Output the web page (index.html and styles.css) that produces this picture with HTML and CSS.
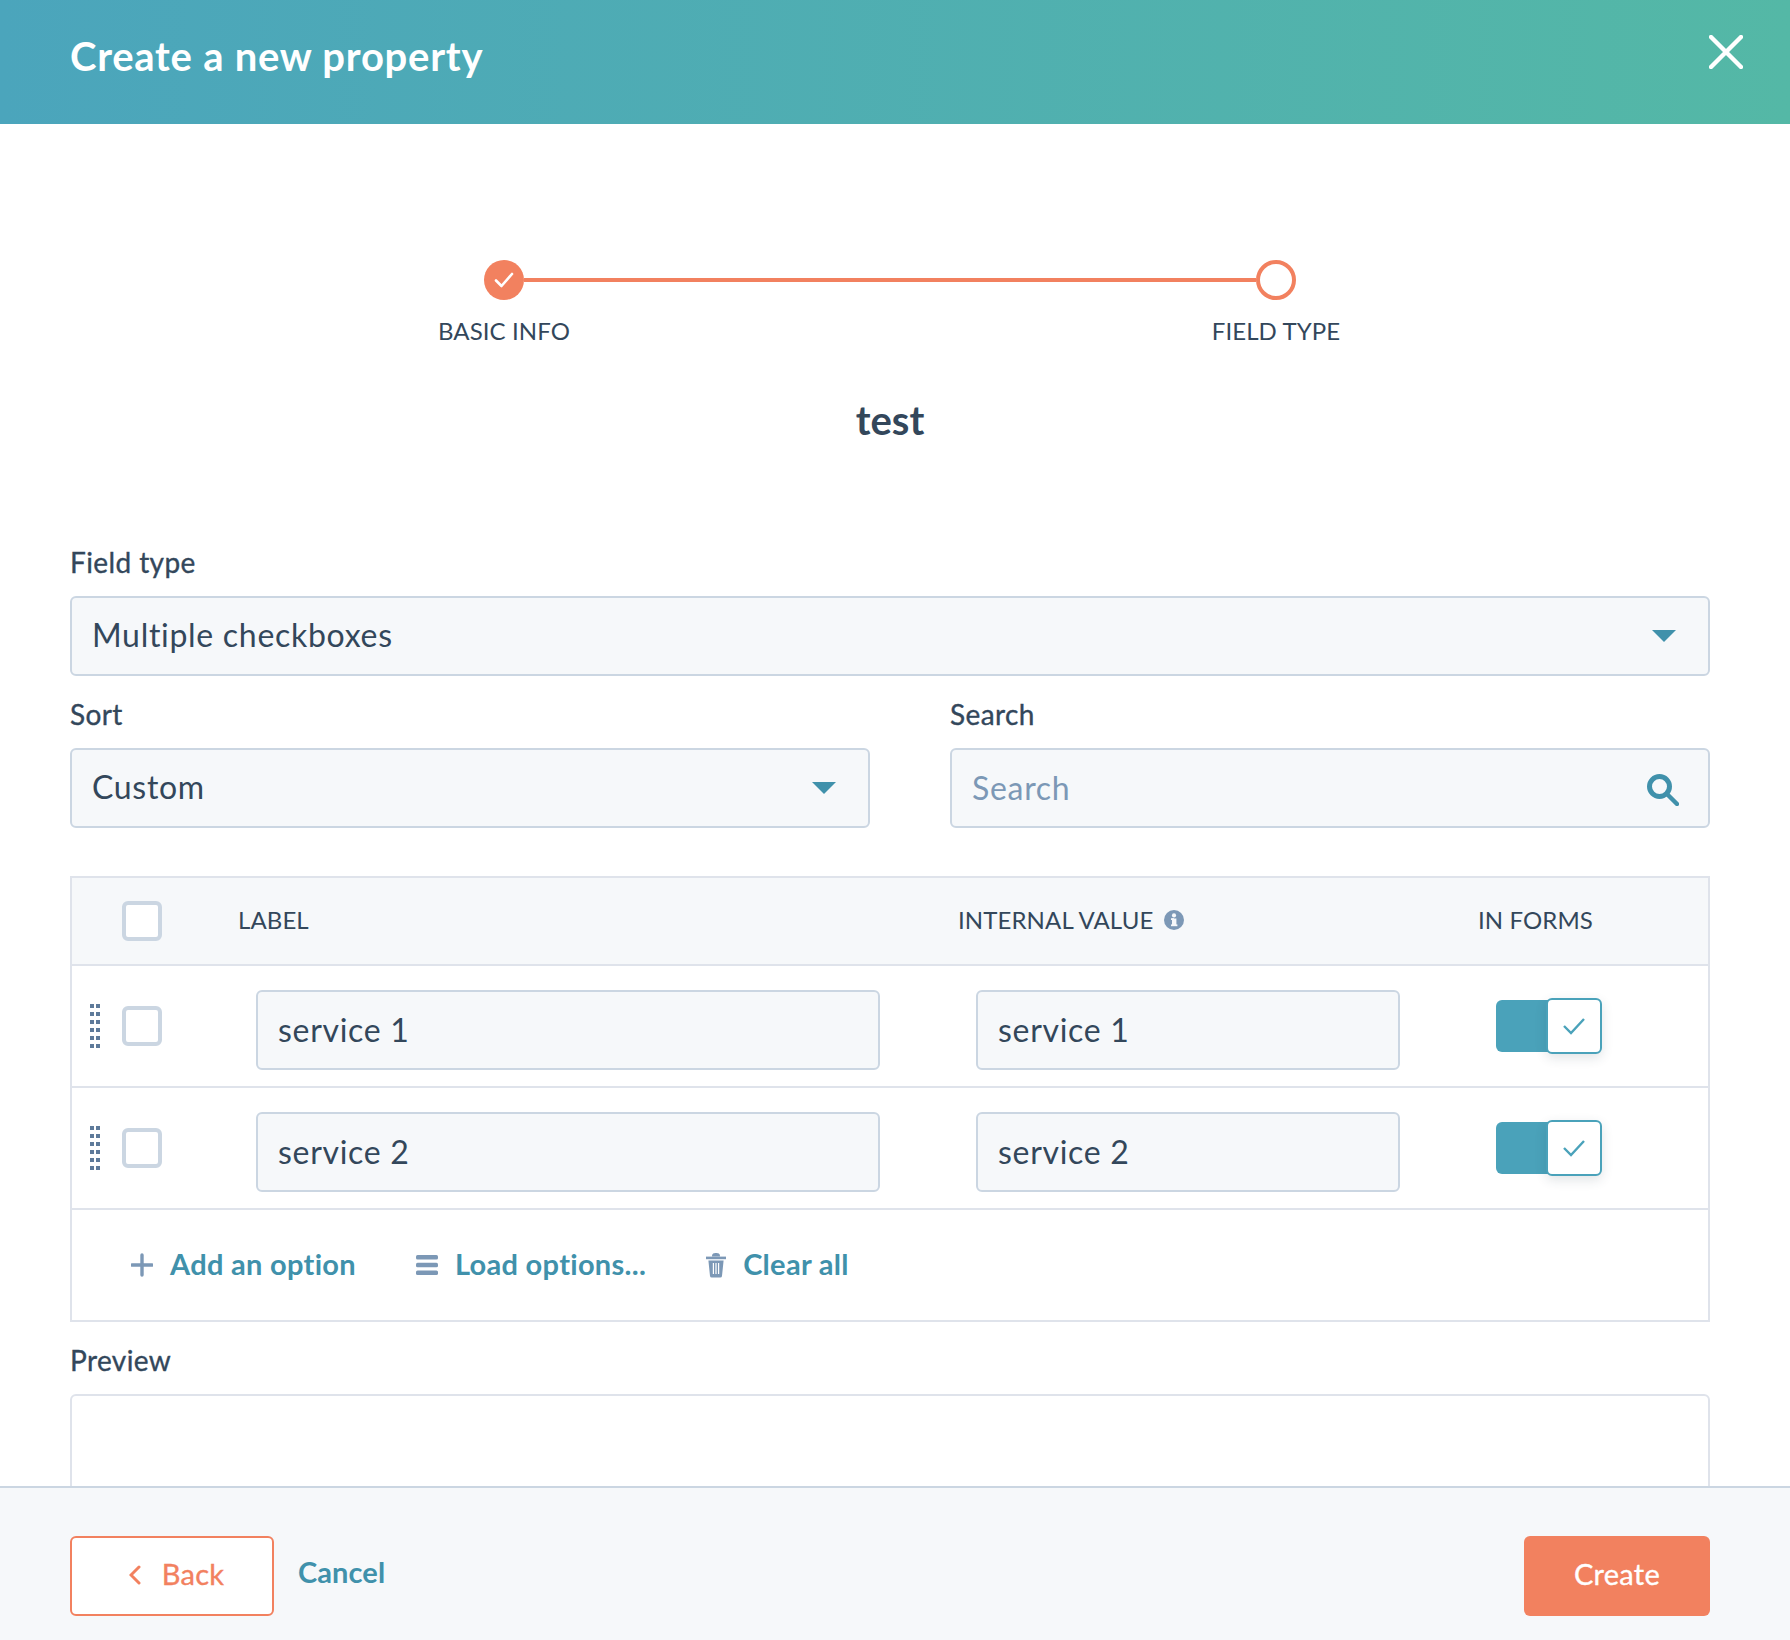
FILE: index.html
```html
<!DOCTYPE html>
<html lang="en">
<head>
<meta charset="utf-8">
<title>Create a new property</title>
<link rel="stylesheet" href="styles.css">
</head>
<body>
<div class="modal">
  <header class="head">
    <h1 class="head-title">Create a new property</h1>
    <svg class="close" width="34" height="34" viewBox="0 0 34 34"><path d="M2 2l30 30M32 2L2 32" stroke="#fff" stroke-width="4.4" stroke-linecap="round" fill="none"/></svg>
  </header>
  <main class="body">
    <div class="track">
      <span class="dot dot-done"><svg width="20" height="16" viewBox="0 0 20 16"><path d="M2 8.5l5.5 5.5L18 2" stroke="#fff" stroke-width="2.6" fill="none" stroke-linecap="round" stroke-linejoin="round"/></svg></span>
      <span class="line"></span>
      <span class="dot dot-open"></span>
    </div>
    <div class="step-labels"><span class="step-label">BASIC INFO</span><span class="step-label">FIELD TYPE</span></div>
    <h2 class="name">test</h2>

    <label class="field-label first">Field type</label>
    <div class="control"><span>Multiple checkboxes</span><span class="caret"></span></div>

    <div class="two">
      <div>
        <label class="field-label">Sort</label>
        <div class="control"><span>Custom</span><span class="caret"></span></div>
      </div>
      <div>
        <label class="field-label">Search</label>
        <div class="control placeholder"><span>Search</span>
          <svg class="search-icon" width="32" height="32" viewBox="0 0 32 32"><circle cx="12.5" cy="12.5" r="10" stroke="#4091ab" stroke-width="5" fill="none"/><path d="M20 20l10 10" stroke="#4091ab" stroke-width="4.4" stroke-linecap="round"/></svg>
        </div>
      </div>
    </div>

    <section class="table">
      <div class="tr th">
        <div class="c-check"><span class="box"></span></div>
        <div>LABEL</div>
        <div class="th-info">INTERNAL VALUE
          <svg class="info" width="20" height="20" viewBox="0 0 20 20"><circle cx="10" cy="10" r="10" fill="#7c98b6"/><rect x="8" y="8.5" width="4.4" height="7.5" fill="#f6f8fa"/><rect x="7" y="8.2" width="3" height="1.8" fill="#f6f8fa"/><rect x="7" y="14.4" width="6.4" height="1.8" fill="#f6f8fa"/><circle cx="10" cy="5.4" r="2.1" fill="#f6f8fa"/></svg>
        </div>
        <div>IN FORMS</div>
      </div>
      <div class="tr row">
        <div class="c-check"><span class="drag"><i></i><i></i><i></i><i></i><i></i><i></i><i></i><i></i><i></i><i></i><i></i><i></i></span><span class="box"></span></div>
        <div class="cell"><div class="control input-label"><span>service 1</span></div></div>
        <div class="cell"><div class="control input-value"><span>service 1</span></div></div>
        <div class="cell"><div class="toggle"><span class="knob"><svg width="24" height="18" viewBox="0 0 24 18"><path d="M2 9l7 7L22 2" stroke="#4aa2ba" stroke-width="2.4" fill="none"/></svg></span></div></div>
      </div>
      <div class="tr row">
        <div class="c-check"><span class="drag"><i></i><i></i><i></i><i></i><i></i><i></i><i></i><i></i><i></i><i></i><i></i><i></i></span><span class="box"></span></div>
        <div class="cell"><div class="control input-label"><span>service 2</span></div></div>
        <div class="cell"><div class="control input-value"><span>service 2</span></div></div>
        <div class="cell"><div class="toggle"><span class="knob"><svg width="24" height="18" viewBox="0 0 24 18"><path d="M2 9l7 7L22 2" stroke="#4aa2ba" stroke-width="2.4" fill="none"/></svg></span></div></div>
      </div>
      <div class="actions">
        <a class="action">
          <svg width="22" height="24" viewBox="0 0 22 24"><path d="M11 2v20M1 12h20" stroke="#7c98b6" stroke-width="3.4" stroke-linecap="round"/></svg>
          <span>Add an option</span>
        </a>
        <a class="action">
          <svg width="22" height="22" viewBox="0 0 22 22"><rect x="0" y="1" width="22" height="4.6" rx="1.6" fill="#7c98b6"/><rect x="0" y="8.7" width="22" height="4.6" rx="1.6" fill="#7c98b6"/><rect x="0" y="16.4" width="22" height="4.6" rx="1.6" fill="#7c98b6"/></svg>
          <span>Load options...</span>
        </a>
        <a class="action">
          <svg width="20" height="26" viewBox="0 0 20 26"><path d="M0 4.6h20v2.6H0z" fill="#7c98b6"/><path d="M6 4.6C6 1.5 7.5 1 10 1s4 .5 4 3.6z" fill="#7c98b6"/><path d="M2.4 8.4h15.2L16 24a1.8 1.8 0 0 1-1.8 1.6H5.8A1.8 1.8 0 0 1 4 24z" fill="#7c98b6"/><path d="M7.4 11v11M10 11v11M12.6 11v11" stroke="#fff" stroke-width="1.2"/></svg>
          <span>Clear all</span>
        </a>
      </div>
    </section>

    <label class="field-label preview-label">Preview</label>
    <div class="preview"></div>
  </main>
  <footer class="foot">
    <a class="btn btn-back">
      <svg class="chev" width="12" height="20" viewBox="0 0 12 20"><path d="M10 2l-8 8 8 8" stroke="#f2815f" stroke-width="3" fill="none" stroke-linecap="round"/></svg>
      <span>Back</span>
    </a>
    <a class="cancel">Cancel</a>
    <a class="btn btn-create">Create</a>
  </footer>
</div>
</body>
</html>
```
FILE: styles.css
```css
* { box-sizing: border-box; }
html, body { margin: 0; padding: 0; }
body { font-family: Lato, "Open Sans", sans-serif; color: #33475b; background: #fff; }
.modal { width: 1790px; height: 1640px; display: flex; flex-direction: column; overflow: hidden; }

.head { flex: none; height: 124px; padding: 0 47px 0 70px; display: flex; justify-content: space-between; background: linear-gradient(90deg, #4ba5bc 0%, #54b8a6 100%); }
.head-title { margin: 35px 0 0; font-size: 40px; line-height: 42px; font-weight: 700; color: #fff; letter-spacing: 0.75px; }
.close { margin-top: 35px; }

.body { flex: 1; min-height: 0; overflow: hidden; padding: 136px 80px 0 70px; }

.track { width: 812px; margin: 0 auto; display: flex; align-items: center; }
.dot { flex: none; width: 40px; height: 40px; border-radius: 50%; display: flex; align-items: center; justify-content: center; }
.dot-done { background: #f2815f; }
.dot-open { border: 4px solid #f2815f; background: #fff; }
.line { flex: 1; height: 4px; background: #f2815f; }
.step-labels { width: 932px; margin: 16px auto 0; display: flex; justify-content: space-between; }
.step-label { width: 160px; text-align: center; font-size: 24px; line-height: 30px; letter-spacing: 0.1px; }
.name { margin: 51px 0 0; text-align: center; font-size: 40px; line-height: 46px; font-weight: 700; }

.field-label { display: block; font-size: 28px; line-height: 32px; font-weight: 400; -webkit-text-stroke: 0.35px #33475b; letter-spacing: 0.4px; margin-bottom: 18px; }
.field-label.first { margin-top: 103px; }
.control { height: 80px; display: flex; align-items: center; justify-content: space-between; padding: 0 20px 4px; background: #f6f8fa; border: 2px solid #cbd6e2; border-radius: 6px; font-size: 32px; letter-spacing: 0.7px; }
.caret { width: 0; height: 0; border-left: 12px solid transparent; border-right: 12px solid transparent; border-top: 12px solid #4091ab; margin: 4px 12px 0 0; }
.placeholder { color: #7c98b6; padding-bottom: 2px; }
.search-icon { margin: 6px 9px 0 0; }

.two { display: grid; grid-template-columns: 800px 760px; column-gap: 80px; margin-top: 22px; }

.table { margin-top: 48px; border: 2px solid #dfe3eb; }
.tr { display: grid; grid-template-columns: 166px 720px 520px 1fr; }
.th { height: 88px; padding-bottom: 4px; align-items: center; background: #f6f8fa; border-bottom: 2px solid #dfe3eb; font-size: 24px; letter-spacing: 0.1px; }
.th .c-check { padding: 4px 0 0 50px; display: flex; }
.th-info { display: flex; align-items: center; gap: 11px; }
.info { margin-top: 2px; }
.row { height: 122px; border-bottom: 2px solid #dfe3eb; }
.c-check { display: flex; align-items: flex-start; }
.row .c-check { padding: 40px 0 0 18px; }
.box { flex: none; width: 40px; height: 40px; background: #fff; border: 4px solid #cbd6e2; border-radius: 6px; }
.drag { flex: none; width: 10px; margin: -2px 22px 0 0; display: grid; grid-template-columns: 4px 4px; column-gap: 2px; row-gap: 4px; }
.drag i { display: block; height: 4px; background: #5e7a9a; }
.cell { padding: 24px 0 0 18px; }
.cell .control { padding-bottom: 2px; }
.input-label { width: 624px; }
.input-value { width: 424px; }
.toggle { width: 106px; height: 56px; margin-top: 8px; position: relative; }
.toggle::before { content: ""; position: absolute; left: 0; top: 2px; width: 64px; height: 52px; background: #4aa2ba; border-radius: 6px; }
.knob { position: absolute; right: 0; top: 0; width: 56px; height: 56px; background: #fff; border: 2px solid #4aa2ba; border-radius: 6px; display: flex; align-items: center; justify-content: center; box-shadow: 0 4px 12px rgba(45, 62, 80, 0.14); }

.actions { height: 110px; padding-left: 59px; display: flex; align-items: center; gap: 60px; }
.action { display: flex; align-items: center; gap: 17px; font-size: 29px; font-weight: 700; letter-spacing: 0.3px; color: #4091ab; }
.action span { padding-bottom: 4px; }

.preview-label { margin-top: 22px; }
.preview { height: 160px; border: 2px solid #dfe3eb; border-radius: 6px 6px 0 0; }

.foot { flex: none; height: 154px; padding: 48px 80px 0 70px; display: flex; align-items: flex-start; background: #f6f8fa; border-top: 2px solid #cbd6e2; }
.btn { height: 80px; padding-bottom: 5px; border-radius: 6px; display: flex; align-items: center; justify-content: center; font-size: 29px; font-weight: 400; letter-spacing: 0.3px; }
.btn-back { width: 204px; gap: 21px; background: #fff; border: 2px solid #f2815f; color: #f2815f; -webkit-text-stroke: 0.35px #f2815f; }
.chev { margin: 3px 0 0 9px; }
.cancel { margin: 16px 0 0 24px; font-size: 29px; line-height: 40px; font-weight: 700; letter-spacing: 0.1px; color: #4091ab; }
.btn-create { width: 186px; margin-left: auto; background: #f2815f; color: #fff; -webkit-text-stroke: 0.35px #fff; }
```
